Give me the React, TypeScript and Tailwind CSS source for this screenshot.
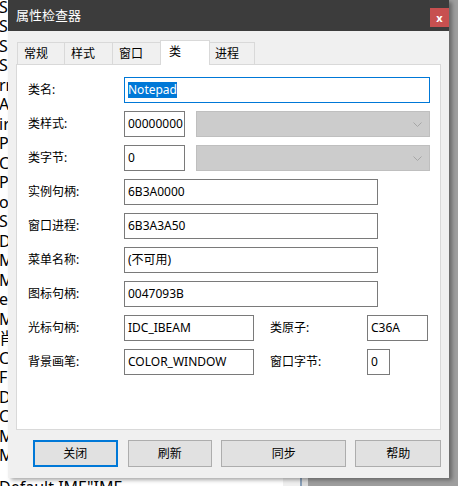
import React from "react";

const bgLines = [
  "S", "S", "S", "S", "S", "rr", "A", "ir", "P", "C", "Pil", "o", "S",
  "De", "MI", "M", "e", "ME", "肖", "C", "F", "De", "Co", "M", "MS",
];

function Field({ width, children }: { width: string; children: React.ReactNode }) {
  return (
    <div
      className={`${width} h-[26px] shrink-0 border border-[#7a7a7a] bg-white pl-[3px] flex items-center overflow-hidden whitespace-nowrap text-[12px] text-black`}
    >
      {children}
    </div>
  );
}

function Combo() {
  return (
    <div className="w-[234px] h-[26px] ml-[11px] shrink-0 bg-[#cccccc] border border-[#bfbfbf] flex items-center justify-end pr-[7px]">
      <svg width="9" height="5" viewBox="0 0 9 5">
        <path d="M0.5 0.5 L4.5 4.5 L8.5 0.5" fill="none" stroke="#a6a6a6" strokeWidth="1" />
      </svg>
    </div>
  );
}

function Label({ text, width = "w-[96px]" }: { text: string; width?: string }) {
  return <div className={`${width} shrink-0 text-[12px] text-black`}>{text}</div>;
}

export default function App() {
  const tabs = [
    { name: "常规", w: "w-[47px]" },
    { name: "样式", w: "w-[48px]" },
    { name: "窗口", w: "w-[48px]" },
  ];

  return (
    <div
      className="relative w-[458px] h-[486px] overflow-hidden bg-[#9e9e9e]"
      style={{ fontFamily: '"Noto Sans", "Noto Sans CJK SC", sans-serif' }}
    >
      {/* background window behind the dialog */}
      <div className="flex h-full">
        <div className="w-[283px] h-full bg-white overflow-hidden flex flex-col">
          <div className="w-[8px] h-[478px] shrink-0 overflow-hidden">
            <div className="-mt-[22px] -ml-[1px] text-[16px] leading-[19.5px] text-black whitespace-nowrap">
              {bgLines.map((l, i) => (
                <div key={i}>{l}</div>
              ))}
            </div>
          </div>
          <div className="-ml-[1px] text-[16px] leading-[19.5px] text-black whitespace-nowrap">
            Default IME"IME
          </div>
        </div>
        <div className="w-[17px] h-full bg-[#f0f0f0]" />
        <div className="w-[8px] h-full bg-[#dcdcdc] border-l-2 border-[#8aa0b8]" />
      </div>

      {/* dialog */}
      <div className="absolute left-[8px] top-0 w-[441px] h-[478px] bg-[#f0f0f0] shadow-[3px_2px_4px_rgba(0,0,0,0.35)] flex flex-col">
        <div className="h-[31px] bg-[#3c3c3c] flex items-start justify-between">
          <div className="pl-[8px] pt-[6px] text-[13px] text-white">属性检查器</div>
          <div className="mt-[8px] w-[19px] h-[19px] bg-[#c75050] flex items-center justify-center text-white text-[11px] font-bold leading-none">
            x
          </div>
        </div>

        <div className="px-[8px] pt-[9px]">
          <div className="flex items-end h-[24px] pl-[1px]">
            {tabs.map((t) => (
              <div
                key={t.name}
                className={`${t.w} h-[22px] border-t border-l border-[#d9d9d9] bg-[#f0f0f0] pl-[6px] pt-[2px] text-[12px] text-black`}
              >
                {t.name}
              </div>
            ))}
            <div className="relative z-10 w-[50px] h-[25px] -mb-px border-t border-l border-r border-[#d9d9d9] bg-white pl-[8px] pt-[2px] text-[12px] text-black">
              类
            </div>
            <div className="w-[45px] h-[22px] border-t border-r border-[#d9d9d9] bg-[#f0f0f0] pl-[5px] pt-[2px] text-[12px] text-black">
              进程
            </div>
          </div>

          <div className="h-[366px] bg-white border border-[#d9d9d9] pt-[12px] pl-[11px] flex flex-col gap-[8px]">
            <div className="flex items-center h-[26px]">
              <Label text="类名:" />
              <div className="w-[306px] h-[26px] border border-[#0078d7] bg-white pl-[3px] flex items-center text-[12px]">
                <span className="bg-[#0078d7] text-white leading-[16px]">Notepad</span>
              </div>
            </div>
            <div className="flex items-center h-[26px]">
              <Label text="类样式:" />
              <Field width="w-[61px]">00000000</Field>
              <Combo />
            </div>
            <div className="flex items-center h-[26px]">
              <Label text="类字节:" />
              <Field width="w-[61px]">0</Field>
              <Combo />
            </div>
            <div className="flex items-center h-[26px]">
              <Label text="实例句柄:" />
              <Field width="w-[254px]">6B3A0000</Field>
            </div>
            <div className="flex items-center h-[26px]">
              <Label text="窗口进程:" />
              <Field width="w-[254px]">6B3A3A50</Field>
            </div>
            <div className="flex items-center h-[26px]">
              <Label text="菜单名称:" />
              <Field width="w-[254px]">(不可用)</Field>
            </div>
            <div className="flex items-center h-[26px]">
              <Label text="图标句柄:" />
              <Field width="w-[254px]">0047093B</Field>
            </div>
            <div className="flex items-center h-[26px]">
              <Label text="光标句柄:" />
              <Field width="w-[130px]">IDC_IBEAM</Field>
              <div className="ml-[16px]">
                <Label text="类原子:" width="w-[97px]" />
              </div>
              <Field width="w-[61px]">C36A</Field>
            </div>
            <div className="flex items-center h-[26px]">
              <Label text="背景画笔:" />
              <Field width="w-[130px]">COLOR_WINDOW</Field>
              <div className="ml-[16px]">
                <Label text="窗口字节:" width="w-[97px]" />
              </div>
              <Field width="w-[23px]">0</Field>
            </div>
          </div>

          <div className="flex mt-[10px] h-[27px] text-[12px] text-black">
            <button className="ml-[17px] w-[85px] h-[27px] bg-[#e1e1e1] border-2 border-[#0078d7]">关闭</button>
            <button className="ml-[10px] w-[85px] h-[27px] bg-[#e1e1e1] border border-[#adadad]">刷新</button>
            <button className="ml-[9px] w-[126px] h-[27px] bg-[#e1e1e1] border border-[#adadad]">同步</button>
            <button className="ml-[9px] w-[86px] h-[27px] bg-[#e1e1e1] border border-[#adadad]">帮助</button>
          </div>
        </div>
      </div>
    </div>
  );
}
